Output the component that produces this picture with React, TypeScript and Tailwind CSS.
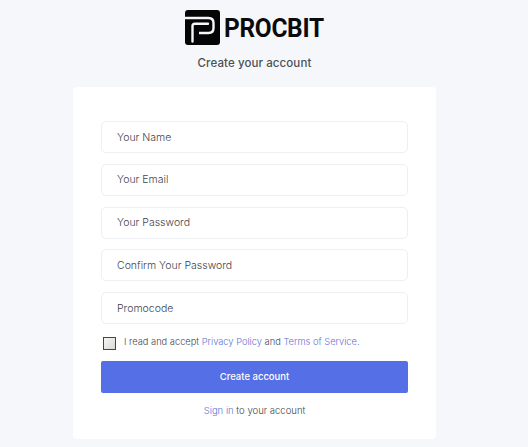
const fieldNames = ["Your Name", "Your Email", "Your Password", "Confirm Your Password", "Promocode"];

export default function App() {
  return (
    <div className="h-[447px] w-[528px] overflow-hidden bg-[#f6f7fa] font-['Inter','Liberation_Sans',sans-serif]">
      <div className="ml-[73px] flex w-[363px] flex-col items-center">
        <div className="mt-[10px] flex h-[35px] items-center gap-[4px] self-start pl-[112px]">
          <svg width="35" height="35" viewBox="0 0 35 35" aria-hidden="true">
            <rect width="35" height="35" rx="3" fill="#050505" />
            <path d="M0 8H23.5C26.8 8 28.5 10 28.5 13V18C28.5 21 26.8 23 23.5 23H14" fill="none" stroke="#f6f7fa" strokeWidth="2.4" />
            <path d="M7.5 31.5V16C7.5 14.5 8.3 13.7 9.8 13.7H23" fill="none" stroke="#f6f7fa" strokeWidth="2.4" strokeLinecap="round" />
          </svg>
          <span className="origin-left font-['Roboto',sans-serif] text-[26px] font-bold leading-none tracking-[-0.3px] text-[#0b0b0b] [transform:scaleX(0.94)]">PROCBIT</span>
        </div>
        <p className="mt-[9px] text-[11.5px] font-medium leading-[18px] tracking-[0.1px] text-[#4a5058]">Create your account</p>
        <div className="mt-[15px] h-[352px] w-full rounded-[4px] bg-white px-[28px] pt-[34px]">
          <div className="flex flex-col gap-[10.75px]">
            {fieldNames.map((name) => (
              <div key={name} className="flex h-[32px] items-center rounded-[5px] border border-[#eeeff3] bg-white pl-[15px] pt-[1px] text-[10.5px] font-light text-[#3f454d]">
                {name}
              </div>
            ))}
          </div>
          <div className="mt-[12px] flex h-[14px] items-center">
            <span className="ml-[2px] h-[13px] w-[13px] border-[1.5px] border-[#1f4e79] bg-gradient-to-br from-[#f6f6f4] to-[#d8dad6]" />
            <p className="ml-[8px] -translate-y-px whitespace-nowrap text-[9.3px] font-light text-[#3f454d]">
              I read and accept <span className="text-[#5f72d6]">Privacy Policy</span> and <span className="text-[#5f72d6]">Terms of Service.</span>
            </p>
          </div>
          <div className="mt-[11px] flex h-[32px] items-center justify-center rounded-[2px] bg-[#5570e6] text-[9.5px] font-medium text-white">
            Create account
          </div>
          <p className="mt-[11px] text-center text-[9.5px] font-light leading-[14px] text-[#3f454d]">
            <span className="text-[#4f7bd8]">Sign in</span> to your account
          </p>
        </div>
      </div>
    </div>
  );
}
